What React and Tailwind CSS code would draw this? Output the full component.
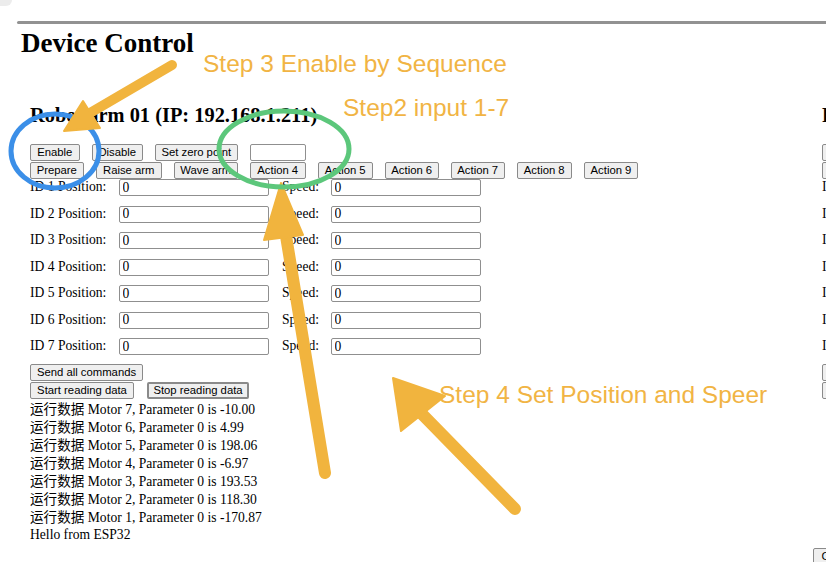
import React from 'react';

const btn =
  "h-[17px] shrink-0 rounded-[2px] border border-[#8a8a8a] bg-[#efefef] px-0 text-center font-['Liberation_Sans',sans-serif] text-[11.3px] leading-none text-black";
const field =
  "h-[17px] shrink-0 rounded-[2px] border border-[#8f8f8f] bg-white px-[2.5px] font-['Liberation_Serif',serif] text-[13.6px] leading-none text-black outline-none";

const topRow = [
  { label: 'Enable', w: 'w-[49.5px]' },
  { label: 'Disable', w: 'w-[50.5px]' },
  { label: 'Set zero point', w: 'w-[82.5px]' },
];

const actionRow = [
  { label: 'Prepare', w: 'w-[53.5px]' },
  { label: 'Raise arm', w: 'w-[65.5px]' },
  { label: 'Wave arm', w: 'w-[63.5px]' },
  { label: 'Action 4', w: 'w-[55.5px]' },
  { label: 'Action 5', w: 'w-[54.5px]' },
  { label: 'Action 6', w: 'w-[53.5px]' },
  { label: 'Action 7', w: 'w-[53.5px]' },
  { label: 'Action 8', w: 'w-[54.5px]' },
  { label: 'Action 9', w: 'w-[54px]' },
];

const motorLog = [
  ['7', '-10.00'],
  ['6', '4.99'],
  ['5', '198.06'],
  ['4', '-6.97'],
  ['3', '193.53'],
  ['2', '118.30'],
  ['1', '-170.87'],
];

const ids = [1, 2, 3, 4, 5, 6, 7];

const ArmPanel = ({ name, ip, logs, tail }) => (
  <div className="w-[792px] shrink-0 px-[10px] pt-[44px]">
    <h2 className="whitespace-nowrap text-[20.4px] font-bold leading-[24px]">
      {name} (IP: {ip})
    </h2>

    {/* control buttons */}
    <div className="mt-[17px] flex gap-[12.5px]">
      {topRow.map((b) => (
        <button key={b.label} className={`${btn} ${b.w}`}>
          {b.label}
        </button>
      ))}
      <input className={`${field} w-[56px]`} defaultValue="" readOnly />
    </div>
    <div className="mt-[1px] flex gap-[12.5px]">
      {actionRow.map((b) => (
        <button key={b.label} className={`${btn} ${b.w}`}>
          {b.label}
        </button>
      ))}
    </div>

    {/* motor position / speed */}
    <div className="mt-[0px] flex flex-col gap-[9.5px]">
      {ids.map((id) => (
        <div key={id} className="flex h-[17px] items-center whitespace-nowrap">
          <span className="w-[89px] shrink-0">ID {id} Position:</span>
          <input className={`${field} w-[150px]`} defaultValue="0" readOnly />
          <span className="ml-[13px] w-[49px] shrink-0">Speed:</span>
          <input className={`${field} w-[150px]`} defaultValue="0" readOnly />
        </div>
      ))}
    </div>

    <div className="mt-[9px] flex">
      <button className={`${btn} w-[113px]`}>Send all commands</button>
    </div>
    <div className="mt-[1px] flex gap-[13px]">
      <button className={`${btn} w-[104px]`}>Start reading data</button>
      <button className={`${btn} w-[102px] border-2 border-[#1c1c1c]`}>Stop reading data</button>
    </div>

    <div className="mt-[2px] whitespace-nowrap">
      {logs.map(([m, v]) => (
        <div key={m} className="leading-[18px]">
          运行数据 Motor {m}, Parameter 0 is {v}
        </div>
      ))}
      {logs.length > 0 && <div className="leading-[15px]">Hello from ESP32</div>}
    </div>

    {tail && (
      <div className="mt-[149px] -ml-[9px] flex">
        <button className={`${btn} w-[44px]`}>Clear</button>
      </div>
    )}
  </div>
);

const orange = '#f1b43e';

const App = () => {
  return (
    <div className="relative h-[562px] w-[826px] overflow-hidden bg-white font-['Liberation_Serif','Noto_Sans_CJK_SC',serif] text-[13.6px] text-[#111]">
      <div className="absolute left-0 top-0 h-[6px] w-[12px] rounded-br-[6px] bg-[#ececec]" />

      <div className="pt-[21px]">
        <div className="ml-[17px] h-[3px] rounded-l-full bg-[#929292]" />
        <h1 className="mt-[4px] pl-[21px] text-[27px] font-bold leading-[31px] text-black">Device Control</h1>

        <div className="flex pl-[20px] text-black">
          <ArmPanel name="Robot arm 01" ip="192.168.1.211" logs={motorLog} />
          <ArmPanel name="Robot arm 02" ip="192.168.1.212" logs={[]} tail />
        </div>
      </div>

      {/* annotations drawn over the screenshot */}
      <svg className="pointer-events-none absolute inset-0" width="826" height="562" viewBox="0 0 826 562">
        <ellipse cx="55" cy="151" rx="44" ry="37" fill="none" stroke="#3b8fe8" strokeWidth="5" />

        <g fill={orange} stroke={orange} strokeLinecap="round" strokeLinejoin="round">
          <line x1="172" y1="65" x2="90" y2="113" strokeWidth="10" />
          <polygon points="64,131 83,101 100,128" strokeWidth="2" />

          <line x1="286" y1="236" x2="325" y2="473" strokeWidth="12" />
          <polygon points="281,183 264,240 303,235" strokeWidth="2" />

          <line x1="421" y1="413" x2="515" y2="509" strokeWidth="12" />
          <polygon points="393,378 401,431 445,396" strokeWidth="2" />
        </g>

        <ellipse cx="284" cy="149" rx="65" ry="38" fill="none" stroke="#5cc77b" strokeWidth="5" />
      </svg>

      <div className="pointer-events-none absolute left-[203px] top-[51.6px] whitespace-nowrap font-['Liberation_Sans',sans-serif] text-[24.5px] leading-none text-[#f1b444]">
        Step 3 Enable by Sequence
      </div>
      <div className="pointer-events-none absolute left-[343px] top-[96px] whitespace-nowrap font-['Liberation_Sans',sans-serif] text-[24.5px] leading-none text-[#f1b444]">
        Step2 input 1-7
      </div>
      <div className="pointer-events-none absolute left-[439px] top-[382.8px] whitespace-nowrap font-['Liberation_Sans',sans-serif] text-[24.5px] leading-none text-[#f1b444]">
        Step 4 Set Position and Speer
      </div>
    </div>
  );
};

export default App;
